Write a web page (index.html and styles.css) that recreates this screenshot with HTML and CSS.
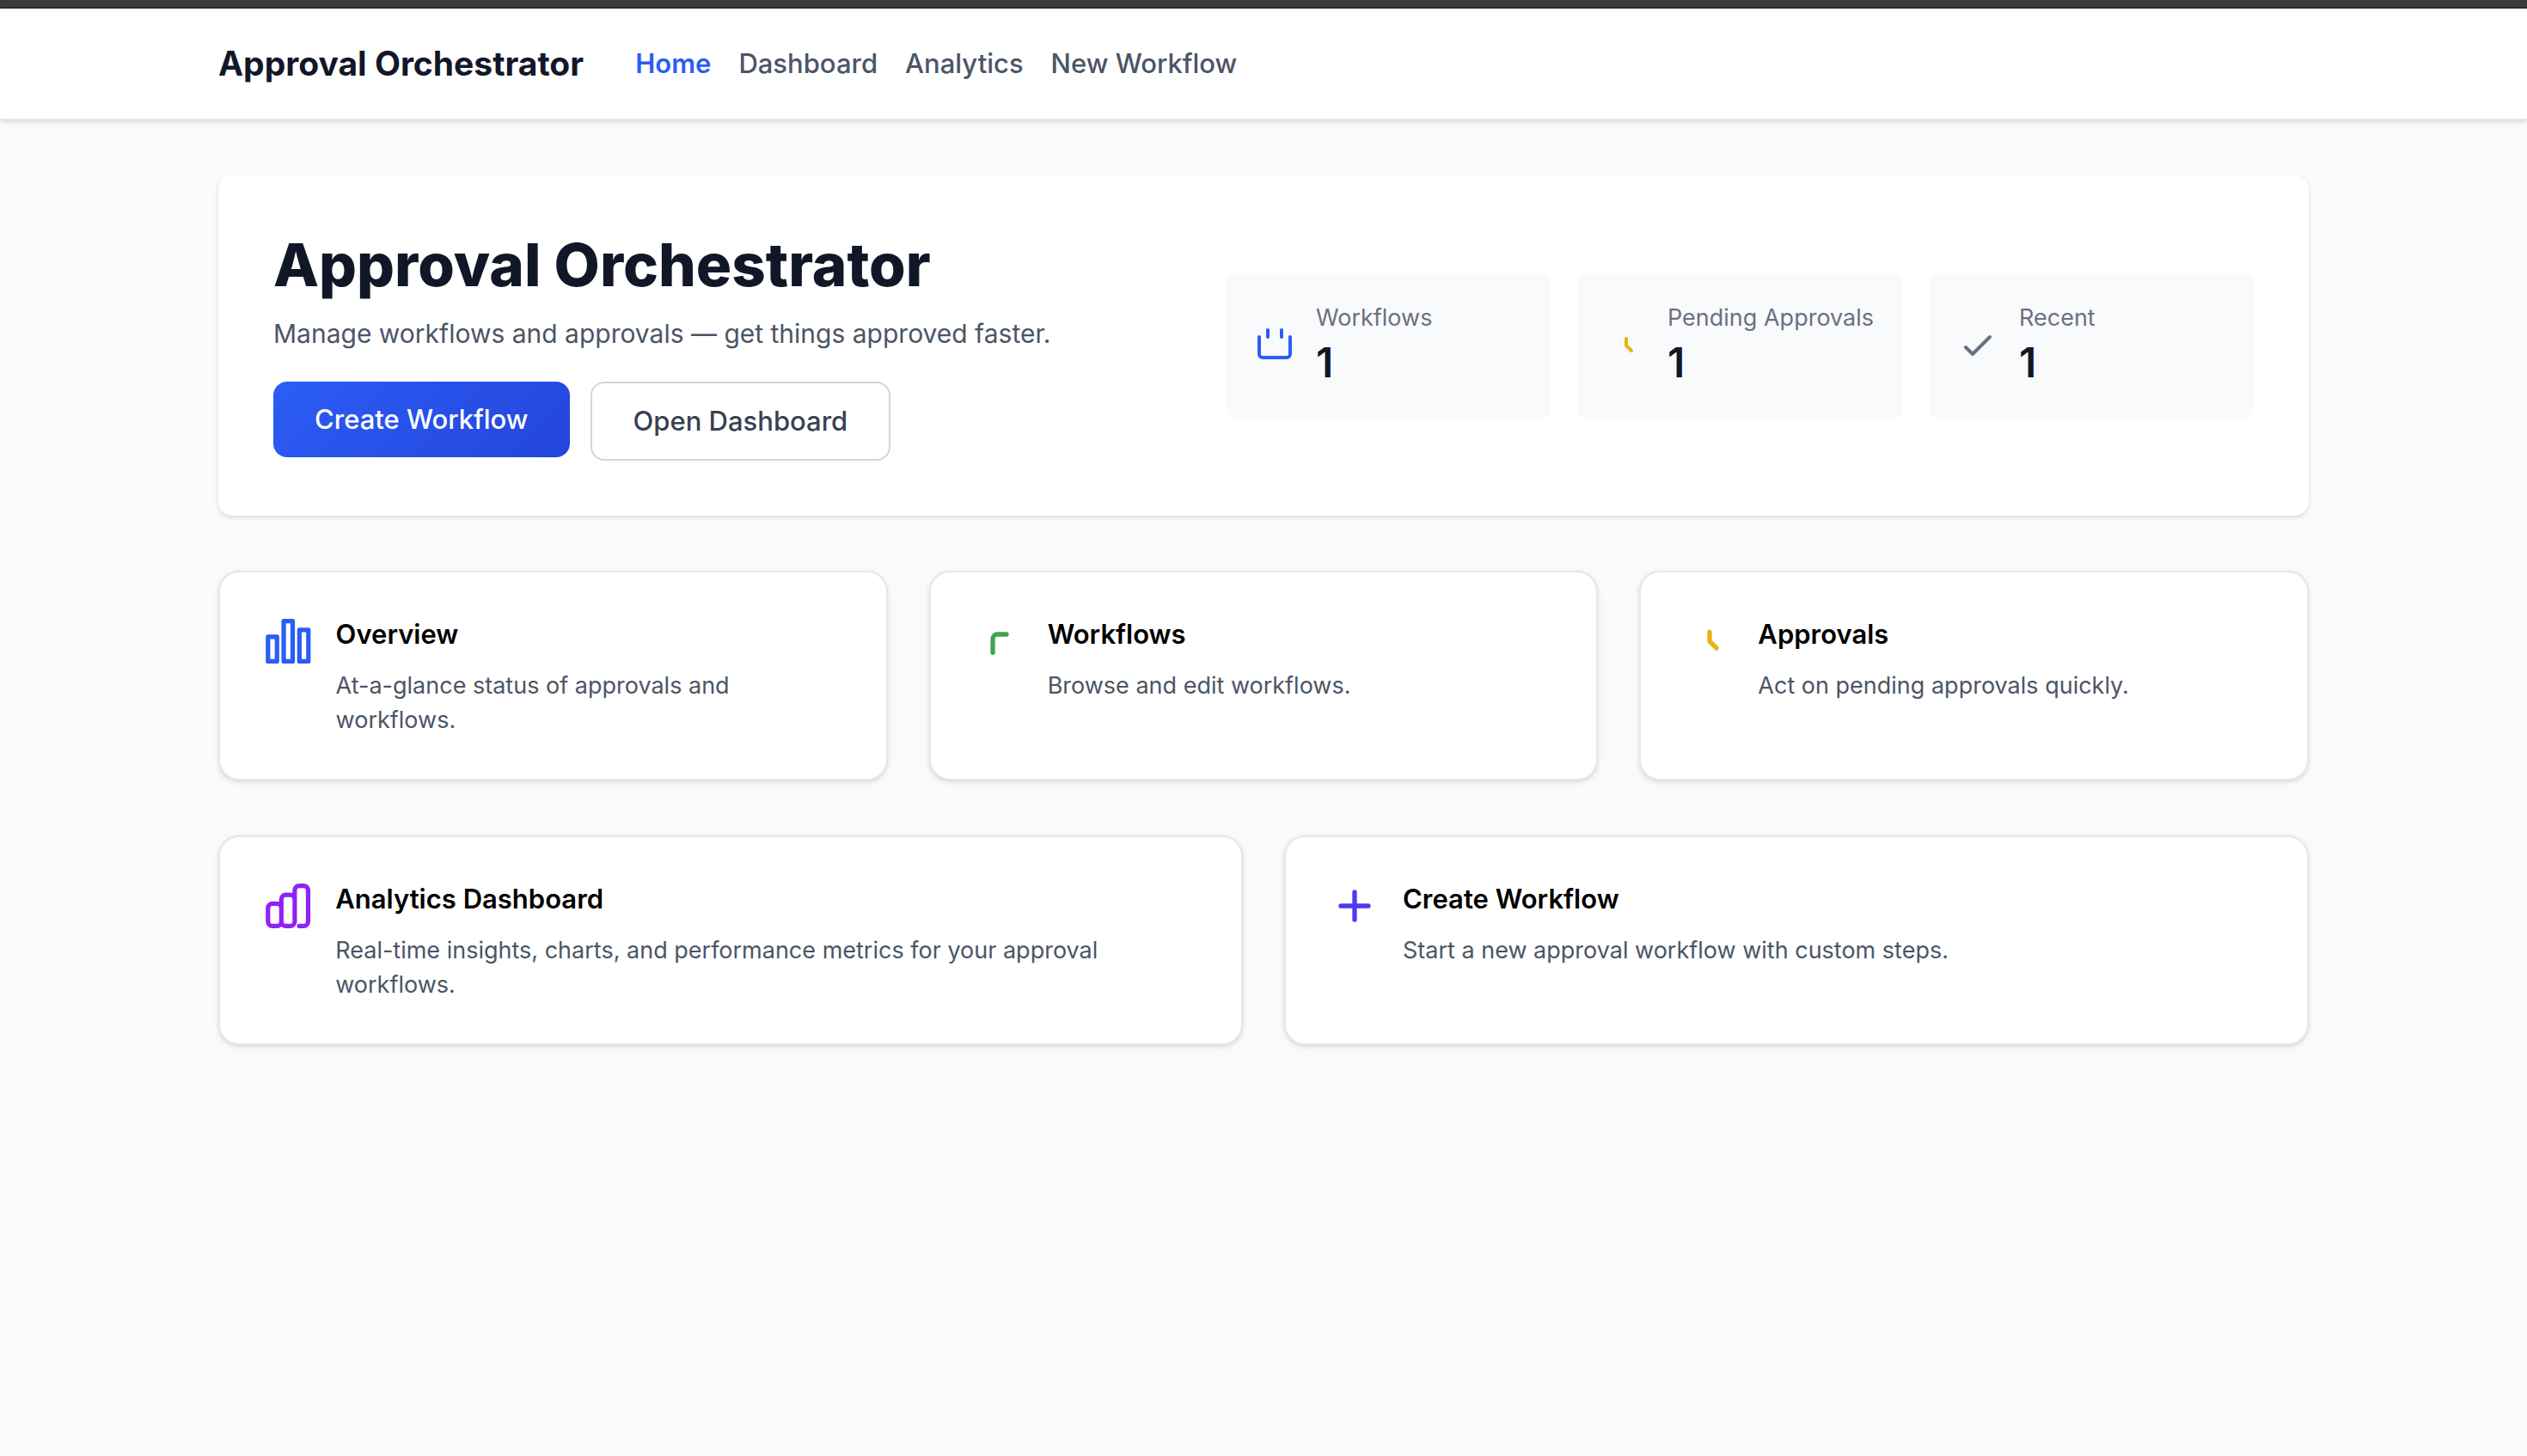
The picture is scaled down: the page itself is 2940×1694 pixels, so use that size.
FILE: index.html
```html
<!DOCTYPE html>
<html lang="en">
<head>
  <meta charset="utf-8">
  <meta name="viewport" content="width=device-width, initial-scale=1">
  <title>Approval Orchestrator</title>
  <link rel="stylesheet" href="styles.css">
</head>
<body>
  <div class="window-edge"></div>
  <header class="site-header">
    <nav class="container nav">
      <a class="brand" href="#">Approval Orchestrator</a>
      <div class="nav-links">
        <a class="nav-link active" href="#" aria-current="page">Home</a>
        <a class="nav-link" href="#dashboard">Dashboard</a>
        <a class="nav-link" href="#analytics">Analytics</a>
        <a class="nav-link" href="#new">New Workflow</a>
      </div>
    </nav>
  </header>

  <main class="container page">
    <section class="hero">
      <div class="hero-intro">
        <h1>Approval Orchestrator</h1>
        <p class="lead">Manage workflows and approvals — get things approved faster.</p>
        <div class="actions">
          <button class="btn btn-primary" type="button">Create Workflow</button>
          <button class="btn btn-outline" type="button">Open Dashboard</button>
        </div>
      </div>
      <div class="stats">
        <div class="stat">
          <svg class="icon stat-icon blue" viewBox="0 0 24 24" aria-hidden="true"><path d="M8 3v4M16 3v4M3 7v10a2 2 0 002 2h14a2 2 0 002-2V7"/></svg>
          <div>
            <div class="stat-label">Workflows</div>
            <div class="stat-value">1</div>
          </div>
        </div>
        <div class="stat">
          <svg class="icon stat-icon yellow" viewBox="0 0 24 24" aria-hidden="true"><path d="M12 8v4l3 3"/></svg>
          <div>
            <div class="stat-label">Pending Approvals</div>
            <div class="stat-value">1</div>
          </div>
        </div>
        <div class="stat">
          <svg class="icon stat-icon gray" viewBox="0 0 24 24" aria-hidden="true"><path d="M5 13l4 4L19 7"/></svg>
          <div>
            <div class="stat-label">Recent</div>
            <div class="stat-value">1</div>
          </div>
        </div>
      </div>
    </section>

    <section class="cards cards-three">
      <a class="card" href="#overview">
        <svg class="icon card-icon blue" viewBox="0 0 24 24" aria-hidden="true"><path d="M3 10h4v11H3zM10 3h4v18h-4zM17 7h4v14h-4z"/></svg>
        <div>
          <h2>Overview</h2>
          <p>At-a-glance status of approvals and workflows.</p>
        </div>
      </a>
      <a class="card" href="#workflows">
        <svg class="icon card-icon green" viewBox="0 0 24 24" aria-hidden="true"><path d="M9 17v-6a2 2 0 012-2h4"/></svg>
        <div>
          <h2>Workflows</h2>
          <p>Browse and edit workflows.</p>
        </div>
      </a>
      <a class="card" href="#approvals">
        <svg class="icon card-icon yellow" viewBox="0 0 24 24" aria-hidden="true"><path d="M12 8v4l3 3"/></svg>
        <div>
          <h2>Approvals</h2>
          <p>Act on pending approvals quickly.</p>
        </div>
      </a>
    </section>

    <section class="cards cards-two">
      <a class="card" href="#analytics">
        <svg class="icon card-icon purple" viewBox="0 0 24 24" aria-hidden="true"><path d="M9 19v-6a2 2 0 00-2-2H5a2 2 0 00-2 2v6a2 2 0 002 2h2a2 2 0 002-2zm0 0V9a2 2 0 012-2h2a2 2 0 012 2v10m-6 0a2 2 0 002 2h2a2 2 0 002-2m0 0V5a2 2 0 012-2h2a2 2 0 012 2v14a2 2 0 01-2 2h-2"/></svg>
        <div>
          <h2>Analytics Dashboard</h2>
          <p>Real-time insights, charts, and performance metrics for your approval workflows.</p>
        </div>
      </a>
      <a class="card" href="#new">
        <svg class="icon card-icon indigo" viewBox="0 0 24 24" aria-hidden="true"><path d="M12 6v12M6 12h12"/></svg>
        <div>
          <h2>Create Workflow</h2>
          <p>Start a new approval workflow with custom steps.</p>
        </div>
      </a>
    </section>
  </main>
</body>
</html>
```

FILE: styles.css
```css
*,
*::before,
*::after {
  box-sizing: border-box;
}

body {
  margin: 0;
  background: #f9fafc;
  color: #000;
  font-family: Inter, "Liberation Sans", sans-serif;
  font-size: 31px;
  line-height: 48px;
}

h1,
h2,
p {
  margin: 0;
}

a {
  color: inherit;
  text-decoration: none;
}

.container {
  width: 100%;
  max-width: 2560px;
  margin: 0 auto;
  padding: 0 64px;
}

.window-edge {
  height: 10px;
  background: #3b3a3f;
  border-bottom: 2px solid #2e2d32;
}

/* Header */
.site-header {
  background: #fff;
  border-bottom: 2px solid #e5e7eb;
  box-shadow: 0 2px 6px rgba(0, 0, 0, 0.1), 0 2px 4px -2px rgba(0, 0, 0, 0.1);
}

.nav {
  display: flex;
  align-items: center;
  gap: 60px;
  min-height: 128px;
}

.brand {
  color: #121728;
  font-size: 39px;
  font-weight: 700;
}

.nav-links {
  display: flex;
  gap: 32px;
}

.nav-link {
  color: #4b5565;
  font-weight: 500;
}

.nav-link.active {
  color: #2b5df5;
  font-weight: 600;
}

/* Page */
.page {
  display: flex;
  flex-direction: column;
  gap: 64px;
  padding-top: 64px;
  padding-bottom: 64px;
}

.hero {
  display: flex;
  align-items: center;
  justify-content: space-between;
  gap: 48px;
  padding: 64px;
  background: #fff;
  border-radius: 16px;
  box-shadow: 0 2px 6px rgba(0, 0, 0, 0.1), 0 2px 4px -2px rgba(0, 0, 0, 0.1);
}

.hero h1 {
  color: #121728;
  font-size: 69px;
  font-weight: 800;
  line-height: 80px;
}

.lead {
  margin-top: 16px;
  color: #4b5565;
  font-size: 30px;
}

.actions {
  display: flex;
  align-items: flex-start;
  gap: 24px;
  margin-top: 32px;
}

.btn {
  padding: 20px 48px;
  border: 0;
  border-radius: 16px;
  font: inherit;
  font-weight: 500;
  cursor: pointer;
}

.btn-primary {
  background: linear-gradient(135deg, #2c5df5, #2345dc);
  color: #fff;
}

.btn-outline {
  border: 2px solid #d1d5db;
  background: #fff;
  color: #374152;
}

.stats {
  display: grid;
  grid-template-columns: repeat(3, 1fr);
  gap: 32px;
}

.stat {
  display: flex;
  align-items: center;
  gap: 24px;
  min-width: 377px;
  padding: 32px;
  background: #f9fafc;
  border-radius: 8px;
}

.stat-label {
  color: #6a7180;
  font-size: 27px;
  line-height: 40px;
}

.stat-value {
  color: #121728;
  font-size: 48px;
  font-weight: 600;
  line-height: 64px;
}

/* Cards */
.cards {
  display: grid;
  gap: 48px;
}

.cards-three {
  grid-template-columns: repeat(3, 1fr);
}

.cards-two {
  grid-template-columns: repeat(2, 1fr);
}

.card {
  display: flex;
  align-items: flex-start;
  gap: 24px;
  padding: 48px;
  background: #fff;
  border: 2px solid #e5e7eb;
  border-radius: 24px;
  box-shadow: 0 2px 6px rgba(0, 0, 0, 0.1), 0 2px 4px -2px rgba(0, 0, 0, 0.1);
}

.card h2 {
  font-size: 31px;
  font-weight: 600;
  line-height: 48px;
}

.card p {
  margin-top: 16px;
  color: #4b5565;
  font-size: 27px;
  line-height: 40px;
}

/* Icons */
.icon {
  fill: none;
  stroke: currentColor;
  stroke-width: 2;
  stroke-linecap: round;
  stroke-linejoin: round;
}

.stat-icon {
  flex: none;
  width: 48px;
  height: 48px;
}

.card-icon {
  width: 64px;
  min-width: 0;
  height: 64px;
}

.blue { color: #2b5df5; }
.green { color: #3ea44e; }
.yellow { color: #e8b414; }
.gray { color: #6a7180; }
.purple { color: #8f22f5; }
.indigo { color: #4c3bf0; }
```
